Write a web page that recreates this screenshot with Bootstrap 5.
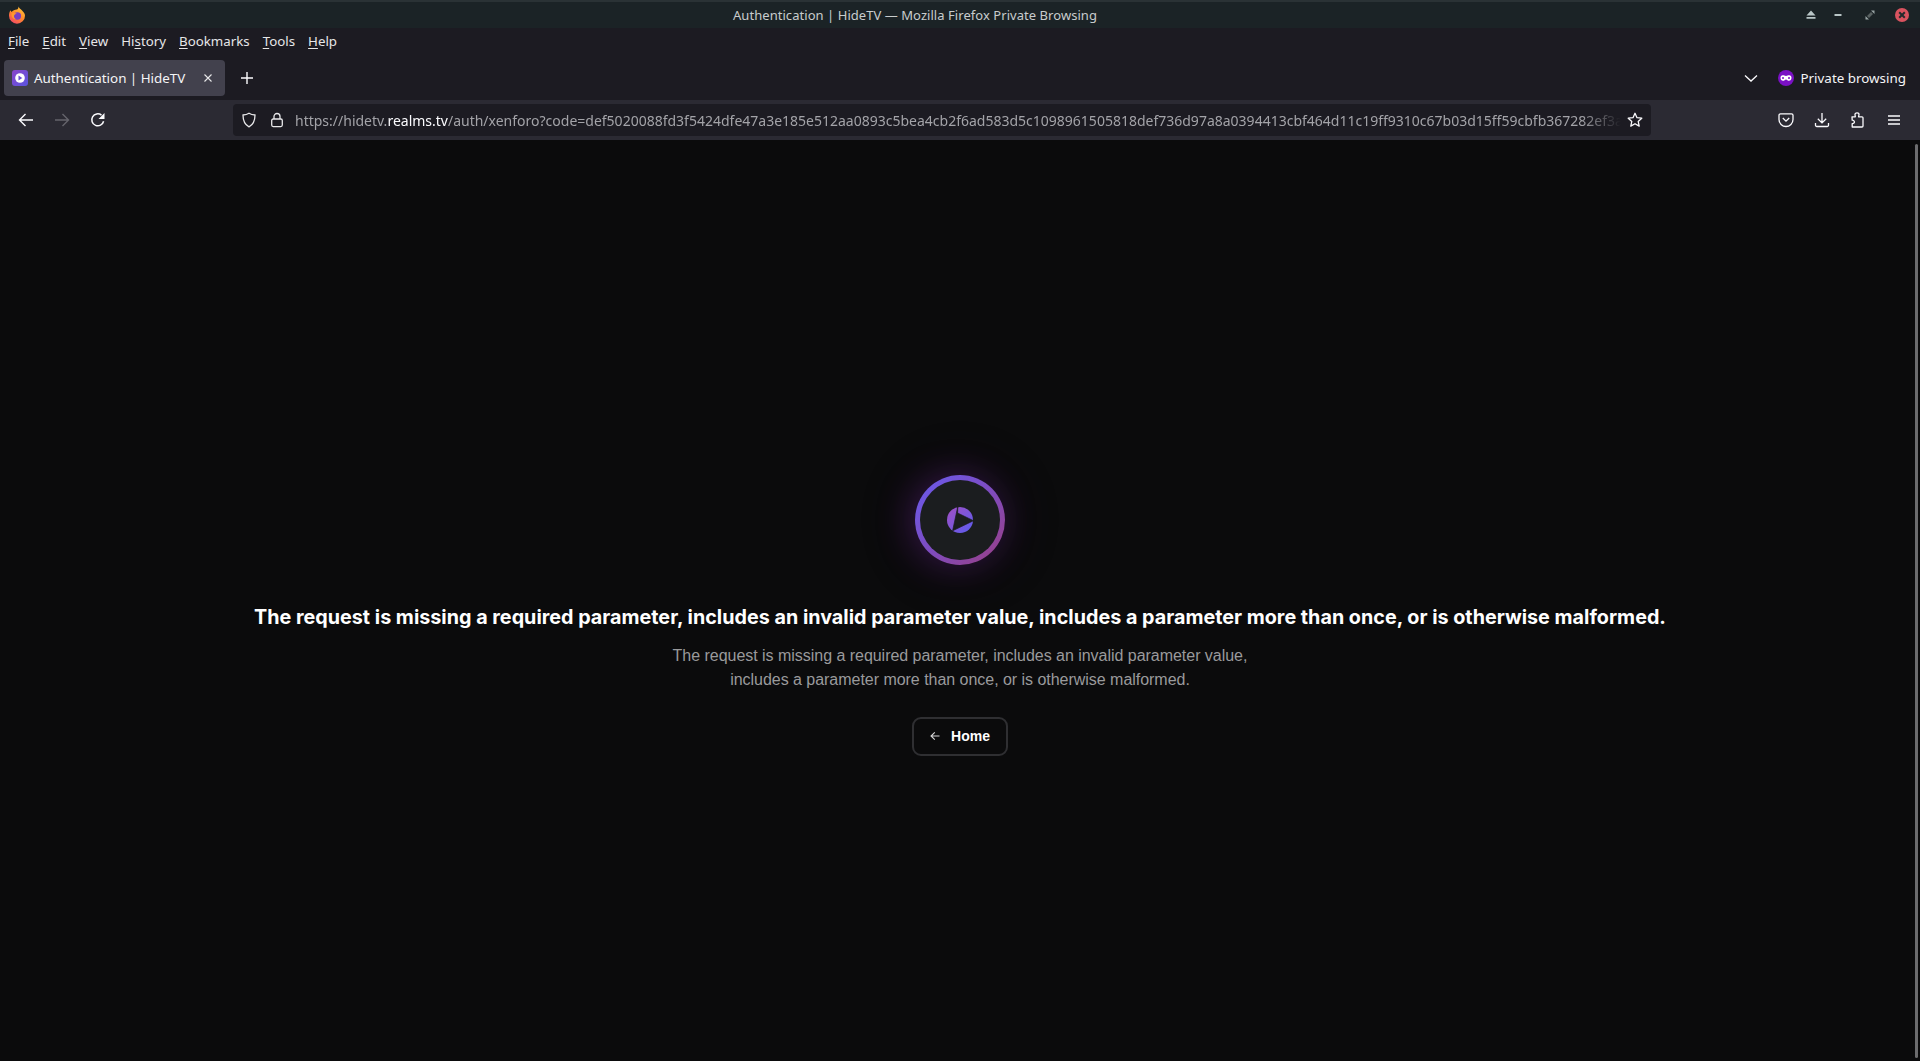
<!DOCTYPE html>
<html lang="en">
<head>
<meta charset="utf-8">
<title>Authentication | HideTV</title>
<link rel="stylesheet" href="https://cdn.jsdelivr.net/npm/bootstrap@5.3.0/dist/css/bootstrap.min.css">
<style>
html,body{height:100%;overflow:hidden;background:#0b0b0c}
body{font-family:"Noto Sans",sans-serif;color:#fff}
.win-shell{height:1061px;width:1920px}
.title-bar{height:28px;background:#1b2326;border-top:2px solid #2a3235;color:#c8cccd;font-size:13px;padding:0 10px 0 8px}
.title-side{width:240px}
.title-text{line-height:25px;letter-spacing:.05px;margin-right:88px}
.wb-min{margin-left:13px}
.wb-max{margin-left:18px}
.wb-close{margin-left:17px}
.menu-bar{height:27px;background:#1c1b22;font-size:13.3px;color:#e6e6e8;padding:1px 0 0 8px;gap:13px}
.menu-bar u{text-underline-offset:2px}
.tab-bar{height:45px;background:#1c1b22;padding:5px 0 4px 4px}
.tab-pill{width:221px;height:36px;background:#42414d;border-radius:4px;padding:0 8px;font-size:13.4px;color:#f4f4f6}
.tab-favicon{width:16px;height:16px;border-radius:3px;background:linear-gradient(135deg,#8a45c9,#5a55e0);flex:none}
.tab-label{margin-left:6px;letter-spacing:-.02px}
.new-tab{margin-left:12px;width:20px}
.priv-label{font-size:13.4px;color:#f4f4f6;margin:0 14px 0 6px}
.chev-wrap{margin-right:20px}
.tool-bar{height:40px;background:#2b2a33;padding:0 0 0 2px}
.tool-left{width:231px;padding-left:16px;gap:20px}
.url-box{width:1418px;height:32px;background:#1c1b22;border-radius:4px;padding:0 8px}
.url-lock{margin-left:12px}
.url-star{margin-left:6px}
.url-text{font-size:14px;line-height:22px;padding-top:1px;color:#a3a3a8;white-space:nowrap;overflow:hidden;margin-left:10px;flex:1;min-width:0;-webkit-mask-image:linear-gradient(to right,#000 97%,transparent 100%);mask-image:linear-gradient(to right,#000 97%,transparent 100%)}
.url-text b{font-weight:400;color:#fbfbfe}
.tool-right{padding-left:127px;gap:20px}
.page-area{background:#0b0b0c;min-height:0}
.page-main{padding-left:8px}
.scroll-track{width:8px;padding:4px 2px 3px 3px}
.scroll-thumb{width:3px;height:100%;background:#6c6c6e;border-radius:2px}
.logo-ring{width:90px;height:90px;padding:5px;border-radius:50%;background:linear-gradient(135deg,#6d58e6 10%,#7e4cc0 50%,#95418f 90%);box-shadow:-4px 0 34px rgba(126,40,170,.34),0 0 70px rgba(100,30,140,.12)}
.logo-core{background:#1b1d1f;border-radius:50%}
.err-title{font-family:Inter,sans-serif;font-weight:700;font-size:19.75px;line-height:28px;margin:38px 0 0;color:#fff}
.err-copy{font-family:"Liberation Sans",sans-serif;font-size:16px;line-height:24px;letter-spacing:-.03px;color:#9a9a9c;margin:13px 0 0}
.home-btn{width:96px;height:39px;margin-top:25px;border:2px solid #2f2f32;border-radius:9px;background:#0b0b0c;color:#fff;font-family:"Liberation Sans",sans-serif;font-weight:700;font-size:14px;gap:11px;text-decoration:none}
.home-btn:hover{color:#fff}
.hero-box{padding-top:29px}
</style>
</head>
<body>
<div class="win-shell d-flex flex-column">

  <div class="title-bar d-flex align-items-center justify-content-between">
    <div class="title-side d-flex align-items-center">
      <svg width="18" height="18" viewBox="0 0 18 18">
        <defs>
          <linearGradient id="fx" x1=".8" y1="0" x2=".2" y2="1"><stop offset="0" stop-color="#ffc83a"/><stop offset=".5" stop-color="#ff8a2a"/><stop offset="1" stop-color="#f3456a"/></linearGradient>
        </defs>
        <path fill="url(#fx)" d="M10.600.5c.3 1.700 1.800 2.300 3.200 3.700 2 1.900 3.200 3.600 3.200 5.500a8 8 0 1 1-16 0C1 7.500 1.700 5.600 2.600 4.300c.2.900.6 1.400 1 1.700C4.700 4.300 6.900 3.700 8.800 3.500c1-.2 1.800-1.500 1.800-3z"/>
        <circle cx="9.400" cy="10" r="3.700" fill="#7a3fc4"/>
        <path fill="#ff9a2e" d="M3.600 7.300c1.700-.6 3.800-.5 5.300.4-1.700.1-2.900 1.100-2.900 2.500 0 1.300.8 2.500 2.200 3-2.300.3-4.400-1.400-4.600-3.400-.1-.9 0-1.800 0-2.500z"/>
      </svg>
    </div>
    <div class="title-text">Authentication | HideTV — Mozilla Firefox Private Browsing</div>
    <div class="title-side d-flex align-items-center justify-content-end">
      <svg width="14" height="14" viewBox="0 0 14 14"><path fill="#b9c6c6" d="M7 2.500l4.500 5h-9zM2.500 9h9v1.800h-9z"/></svg>
      <svg class="wb-min" width="14" height="14" viewBox="0 0 14 14"><rect x="3.500" y="6" width="7" height="2" fill="#b9c6c6"/></svg>
      <svg class="wb-max" width="14" height="14" viewBox="0 0 14 14"><path fill="#9aa5a5" d="M8 2.500h3.500V6zM2.500 8l3.500 3.500H2.500z"/><path fill="#596161" d="M4 8l4-4 2 2-4 4z"/></svg>
      <svg class="wb-close" width="16" height="16" viewBox="0 0 16 16"><circle cx="8" cy="8" r="7" fill="#d9535f"/><path stroke="#232a2c" stroke-width="2" d="M5.200 5.200l5.600 5.600M10.800 5.200l-5.600 5.600"/></svg>
    </div>
  </div>

  <div class="menu-bar d-flex align-items-center">
    <span><u>F</u>ile</span><span><u>E</u>dit</span><span><u>V</u>iew</span><span>Hi<u>s</u>tory</span><span><u>B</u>ookmarks</span><span><u>T</u>ools</span><span><u>H</u>elp</span>
  </div>

  <div class="tab-bar d-flex align-items-center">
    <div class="tab-pill d-flex align-items-center">
      <span class="tab-favicon d-flex align-items-center justify-content-center">
        <svg width="10" height="10" viewBox="0 0 10 10"><circle cx="5" cy="5" r="4.800" fill="#fff"/><path fill="#6a4fd6" d="M3.500 2.600l3.800 2.400-3.800 2.400z"/></svg>
      </span>
      <span class="tab-label">Authentication | HideTV</span>
      <svg class="ms-auto me-1" width="10" height="10" viewBox="0 0 10 10"><path stroke="#e8e8ea" stroke-width="1.100" d="M1.500 1.500l7 7M8.500 1.500l-7 7"/></svg>
    </div>
    <svg class="new-tab" width="14" height="14" viewBox="0 0 14 14"><path stroke="#fbfbfe" stroke-width="1.400" d="M7 1v12M1 7h12"/></svg>
    <div class="ms-auto d-flex align-items-center">
      <svg class="chev-wrap" width="14" height="14" viewBox="0 0 14 14"><path fill="none" stroke="#fbfbfe" stroke-width="1.300" d="M1 4.500L7 10l6-5.500"/></svg>
      <svg width="16" height="16" viewBox="0 0 16 16"><circle cx="8" cy="8" r="8" fill="#7a10c4"/><path fill="#fff" d="M4.700 5.200c1.200 0 2.200.7 3.300.7s2.100-.7 3.300-.7c1.300 0 2.200 1.100 2.200 2.600 0 1.700-1.100 3-2.500 3-1.300 0-2-1.400-3-1.400s-1.700 1.400-3 1.400c-1.400 0-2.500-1.300-2.500-3 0-1.500.9-2.600 2.200-2.600z"/><circle cx="5" cy="8" r="1" fill="#7a10c4"/><circle cx="11" cy="8" r="1" fill="#7a10c4"/></svg>
      <span class="priv-label">Private browsing</span>
    </div>
  </div>

  <div class="tool-bar d-flex align-items-center">
    <div class="tool-left d-flex align-items-center">
      <svg width="16" height="16" viewBox="0 0 16 16"><path fill="none" stroke="#fbfbfe" stroke-width="1.400" d="M15 8H1.500M7.500 2l-6 6 6 6"/></svg>
      <svg width="16" height="16" viewBox="0 0 16 16"><path fill="none" stroke="#65646c" stroke-width="1.400" d="M1 8h13.500M8.500 2l6 6-6 6"/></svg>
      <svg width="16" height="16" viewBox="0 0 16 16"><path fill="none" stroke="#fbfbfe" stroke-width="1.500" d="M13.600 9.200A6 6 0 1 1 11.500 3.100"/><path fill="#fbfbfe" d="M14.500 1v6h-6z"/></svg>
    </div>
    <div class="url-box d-flex align-items-center">
      <svg width="16" height="16" viewBox="0 0 16 16" class="flex-shrink-0"><path fill="none" stroke="#e8e8ea" stroke-width="1.300" d="M8 1.200c2 1.300 3.900 1.700 6 1.800 0 5.500-1.800 9.700-6 11.800C3.800 12.700 2 8.500 2 3c2.100-.1 4-.5 6-1.800z"/></svg>
      <svg width="16" height="16" viewBox="0 0 16 16" class="flex-shrink-0 url-lock"><rect x="2.700" y="7" width="10.600" height="7.600" rx="1.500" fill="none" stroke="#e8e8ea" stroke-width="1.300"/><path fill="none" stroke="#e8e8ea" stroke-width="1.300" d="M5 7V4.500a3 3 0 0 1 6 0V7"/></svg>
      <div class="url-text">https://hidetv.<b>realms.tv</b>/auth/xenforo?code=def5020088fd3f5424dfe47a3e185e512aa0893c5bea4cb2f6ad583d5c1098961505818def736d97a8a0394413cbf464d11c19ff9310c67b03d15ff59cbfb367282ef3a</div>
      <svg width="16" height="16" viewBox="0 0 16 16" class="flex-shrink-0 url-star"><path fill="none" stroke="#fbfbfe" stroke-width="1.300" stroke-linejoin="round" d="M8 1.300l2 4.400 4.800.5-3.600 3.200 1 4.700L8 11.700l-4.200 2.400 1-4.700L1.200 6.200 6 5.700z"/></svg>
    </div>
    <div class="tool-right d-flex align-items-center flex-grow-1">
      <svg width="16" height="16" viewBox="0 0 16 16"><path fill="none" stroke="#fbfbfe" stroke-width="1.300" d="M2.500 1.800h11a1.500 1.500 0 0 1 1.500 1.500v4.200a7 7 0 0 1-14 0V3.300a1.500 1.500 0 0 1 1.500-1.500z"/><path fill="none" stroke="#fbfbfe" stroke-width="1.300" d="M4.800 6L8 9.200 11.200 6"/></svg>
      <svg width="16" height="16" viewBox="0 0 16 16"><path fill="none" stroke="#fbfbfe" stroke-width="1.300" d="M8 1v9.800M3.800 6.700L8 10.900l4.200-4.200M1.500 11v2.200a1.300 1.300 0 0 0 1.300 1.300h10.400a1.300 1.300 0 0 0 1.300-1.300V11"/></svg>
      <svg width="16" height="16" viewBox="0 0 16 16"><path fill="none" stroke="#fbfbfe" stroke-width="1.300" stroke-linejoin="round" d="M2 4.800h3.300C5.300 3.500 5 3.300 5 2.600 5 1.500 6 .9 7 .9s2 .6 2 1.700c0 .7-.4.900-.4 2.200h3.400a1 1 0 0 1 1 1v8.200a1 1 0 0 1-1 1H2.200v-3.400c1.100 0 2.200-.3 2.200-1.500S3.300 8.200 2.200 8.200z"/></svg>
      <svg width="16" height="16" viewBox="0 0 16 16"><path stroke="#fbfbfe" stroke-width="1.300" d="M2 4h12M2 8h12M2 12h12"/></svg>
    </div>
  </div>

  <div class="page-area flex-grow-1 d-flex">
    <main class="page-main flex-grow-1 d-flex flex-column align-items-center justify-content-center text-center">
      <div class="hero-box d-flex flex-column align-items-center">
        <div class="logo-ring d-flex">
          <div class="logo-core flex-grow-1 d-flex align-items-center justify-content-center">
            <svg width="26" height="26" viewBox="-13 -13 26 26">
              <defs><linearGradient id="lg" x1="0" y1="0" x2="1" y2="1"><stop offset="0" stop-color="#a24fc2"/><stop offset="1" stop-color="#5a5cf0"/></linearGradient></defs>
              <circle r="13" fill="url(#lg)"/>
              <path fill="#1b1d1f" stroke="#1b1d1f" stroke-width=".7" stroke-linejoin="miter" d="M-2.200-13.500L-2.400-7 13.500.7-7.400 10.800z"/>
            </svg>
          </div>
        </div>
        <h1 class="err-title">The request is missing a required parameter, includes an invalid parameter value, includes a parameter more than once, or is otherwise malformed.</h1>
        <p class="err-copy">The request is missing a required parameter, includes an invalid parameter value,<br>includes a parameter more than once, or is otherwise malformed.</p>
        <a href="#" class="home-btn btn d-inline-flex align-items-center justify-content-center p-0">
          <svg width="10" height="10" viewBox="0 0 10 10"><path fill="none" stroke="#d8d8d8" stroke-width="1.100" d="M9.500 5H1M4.800 1.300L1 5l3.800 3.700"/></svg>
          <span>Home</span>
        </a>
      </div>
    </main>
    <div class="scroll-track"><div class="scroll-thumb"></div></div>
  </div>
</div>
</body>
</html>
